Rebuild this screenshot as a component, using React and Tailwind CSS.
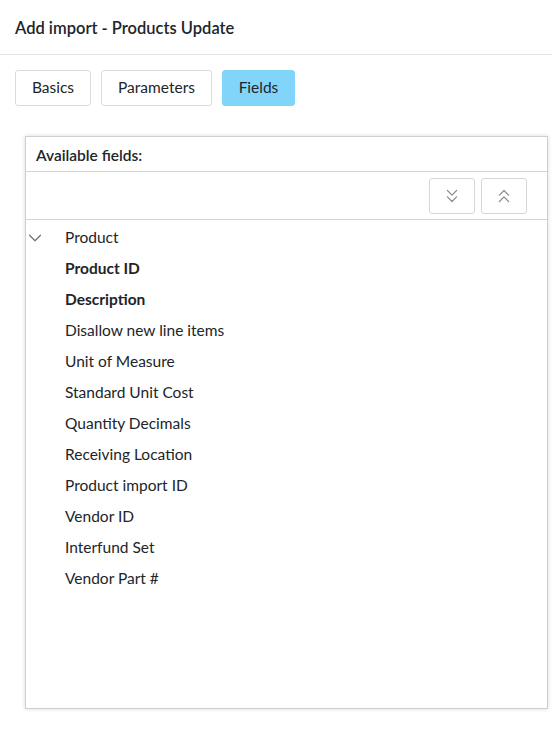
import { ChevronDown, ChevronsDown, ChevronsUp } from 'lucide-react';

const fields = [
    { label: 'Product ID', bold: true },
    { label: 'Description', bold: true },
    { label: 'Disallow new line items' },
    { label: 'Unit of Measure' },
    { label: 'Standard Unit Cost' },
    { label: 'Quantity Decimals' },
    { label: 'Receiving Location' },
    { label: 'Product import ID' },
    { label: 'Vendor ID' },
    { label: 'Interfund Set' },
    { label: 'Vendor Part #' },
];

export default function App() {
    return (
        <div className="w-[552px] h-[735px] bg-white text-[#212529] font-['Lato','Open_Sans',sans-serif]">
            {/* Header */}
            <div className="h-[55px] flex items-center px-[15px] pt-[3px] border-b border-[#e2e2e2]">
                <h1 className="text-[16.5px] font-semibold">Add import - Products Update</h1>
            </div>

            {/* Tabs */}
            <div className="flex gap-[10px] px-[15px] pt-[15px]">
                <button className="h-[36px] w-[76px] rounded-[3px] border border-[#dcdcdc] bg-white text-[15.5px]">Basics</button>
                <button className="h-[36px] w-[111px] rounded-[3px] border border-[#dcdcdc] bg-white text-[15.5px]">Parameters</button>
                <button className="h-[36px] w-[73px] rounded-[3px] border border-[#81d4fa] bg-[#81d4fa] text-[15.5px]">Fields</button>
            </div>

            {/* Panel */}
            <div className="ml-[25px] mt-[30px] w-[523px] h-[573px] border border-[#cfcfcf] shadow-[0_0_4px_rgba(0,0,0,0.15)] flex flex-col">
                <div className="h-[35px] flex items-center px-[10px] pt-[4px] border-b border-[#d4d4d4]">
                    <span className="text-[15.5px] font-semibold">Available fields:</span>
                </div>
                <div className="h-[48px] flex items-center justify-end gap-[6px] pr-[20px] border-b border-[#d4d4d4]">
                    <button className="w-[46px] h-[36px] rounded-[3px] border border-[#d6d6d6] flex items-center justify-center text-[#8a8a8a]">
                        <ChevronsDown size={22} strokeWidth={1.3} />
                    </button>
                    <button className="w-[46px] h-[36px] rounded-[3px] border border-[#d6d6d6] flex items-center justify-center text-[#8a8a8a]">
                        <ChevronsUp size={22} strokeWidth={1.3} />
                    </button>
                </div>
                <div className="pt-[2px]">
                    <div className="h-[31px] flex items-center">
                        <span className="w-[39px] flex text-[#6f6f6f]">
                            <ChevronDown size={22} strokeWidth={1.3} className="-ml-[2px]" />
                        </span>
                        <span className="text-[15.5px]">Product</span>
                    </div>
                    {fields.map((f) => (
                        <div key={f.label} className="h-[31px] flex items-center pl-[39px]">
                            <span className={f.bold ? 'text-[15.5px] font-bold' : 'text-[15.5px]'}>{f.label}</span>
                        </div>
                    ))}
                </div>
            </div>
        </div>
    );
}
